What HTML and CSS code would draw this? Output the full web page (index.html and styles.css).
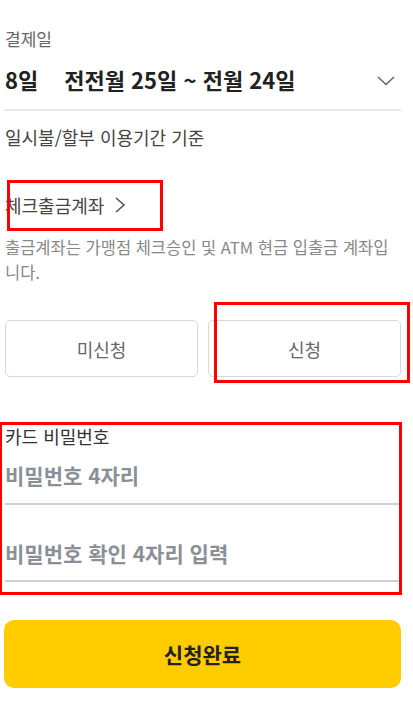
FILE: index.html
```html
<!DOCTYPE html>
<html lang="ko">
<head>
    <meta charset="UTF-8">
    <meta name="viewport" content="width=device-width, initial-scale=1.0">
    <title>체크카드 신청</title>
    <link rel="stylesheet" href="styles.css">
</head>
<body>

<div class="page">
    <div class="field-label">결제일</div>
    <div class="select-row">
        <span class="select-value"><span class="day">8일</span>전전월 25일 ~ 전월 24일</span>
        <svg class="chevron-down" width="18" height="10" viewBox="0 0 18 10">
            <path d="M1 1 L9 8.5 L17 1" fill="none" stroke="#666" stroke-width="1.6"/>
        </svg>
    </div>
    <div class="hint">일시불/할부 이용기간 기준</div>

    <div class="account-link">
        체크출금계좌
        <svg width="12" height="18" viewBox="0 0 12 18">
            <path d="M2 2 L10 9 L2 16" fill="none" stroke="#555" stroke-width="1.6"/>
        </svg>
        <span class="mark mark-account"></span>
    </div>
    <p class="desc">출금계좌는 가맹점 체크승인 및 ATM 현금 입출금 계좌입니다.</p>

    <div class="choice-row">
        <button class="choice">미신청</button>
        <button class="choice">신청<span class="mark mark-choice"></span></button>
    </div>

    <div class="password-box">
        <span class="mark mark-password"></span>
        <div class="password-label">카드 비밀번호</div>
        <input class="pin-input" type="password" placeholder="비밀번호 4자리">
        <input class="pin-input pin-confirm" type="password" placeholder="비밀번호 확인 4자리 입력">
    </div>

    <button class="submit">신청완료</button>
</div>

</body>
</html>
```

FILE: styles.css
```css
body {
    margin: 0;
    padding: 0;
    background-color: white;
    font-family: "Noto Sans CJK KR", "Noto Sans", sans-serif;
    color: #333;
}

.page {
    padding: 25px 12px 0 4px;
}

.field-label {
    font-size: 17px;
    color: #666;
    padding-left: 1px;
    line-height: 28px;
}

.select-row {
    display: flex;
    justify-content: space-between;
    align-items: center;
    height: 56px;
    border-bottom: 2px solid #e8e8e8;
    padding-left: 1px;
}

.select-value {
    font-size: 22px;
    font-weight: bold;
    color: #222;
    margin-top: -4px;
}

.day {
    margin-right: 26px;
}

.chevron-down {
    margin-right: 6px;
}

.hint {
    font-size: 18px;
    color: #444;
    padding-left: 1px;
    margin-top: 14px;
    line-height: 24px;
}

.account-link {
    position: relative;
    display: flex;
    align-items: center;
    gap: 10px;
    font-size: 18px;
    color: #444;
    margin-top: 43px;
    padding-left: 1px;
    line-height: 26px;
}

.desc {
    margin: 17px 0 0;
    font-size: 16.5px;
    line-height: 25px;
    color: #888;
    padding-left: 1px;
    padding-right: 10px;
}

.choice-row {
    display: flex;
    gap: 10px;
    margin-top: 35px;
    padding-left: 1px;
}

.choice {
    position: relative;
    flex: 1;
    height: 57px;
    background-color: white;
    border: 1px solid #d6d8da;
    border-radius: 5px;
    font-family: inherit;
    font-size: 18px;
    color: #666;
}

.password-box {
    position: relative;
    margin-top: 46px;
    padding-left: 1px;
}

.password-label {
    font-size: 18px;
    color: #333;
    line-height: 26px;
}

.pin-input {
    display: block;
    width: 100%;
    box-sizing: border-box;
    border: none;
    border-bottom: 2px solid #cdd1d5;
    padding: 0 0 2px;
    height: 56px;
    font-family: inherit;
    font-size: 21px;
    font-weight: bold;
    outline: none;
}

.pin-confirm {
    height: 77px;
    padding: 20px 0 0;
}

.pin-input::placeholder {
    color: #8b9098;
}

.submit {
    display: block;
    width: 100%;
    height: 68px;
    margin-top: 38px;
    background-color: #ffcc00;
    border: none;
    border-radius: 10px;
    font-family: inherit;
    font-size: 21px;
    font-weight: bold;
    color: #222;
}

/* red annotation boxes */
.mark {
    position: absolute;
    border: 3px solid #ff0000;
    pointer-events: none;
}

.mark-account {
    left: 3px;
    top: -12px;
    width: 150px;
    height: 45px;
}

.mark-choice {
    left: 5px;
    top: -19px;
    width: 190px;
    height: 75px;
}

.mark-password {
    left: -5px;
    top: -1px;
    width: 397px;
    height: 167px;
}
```
